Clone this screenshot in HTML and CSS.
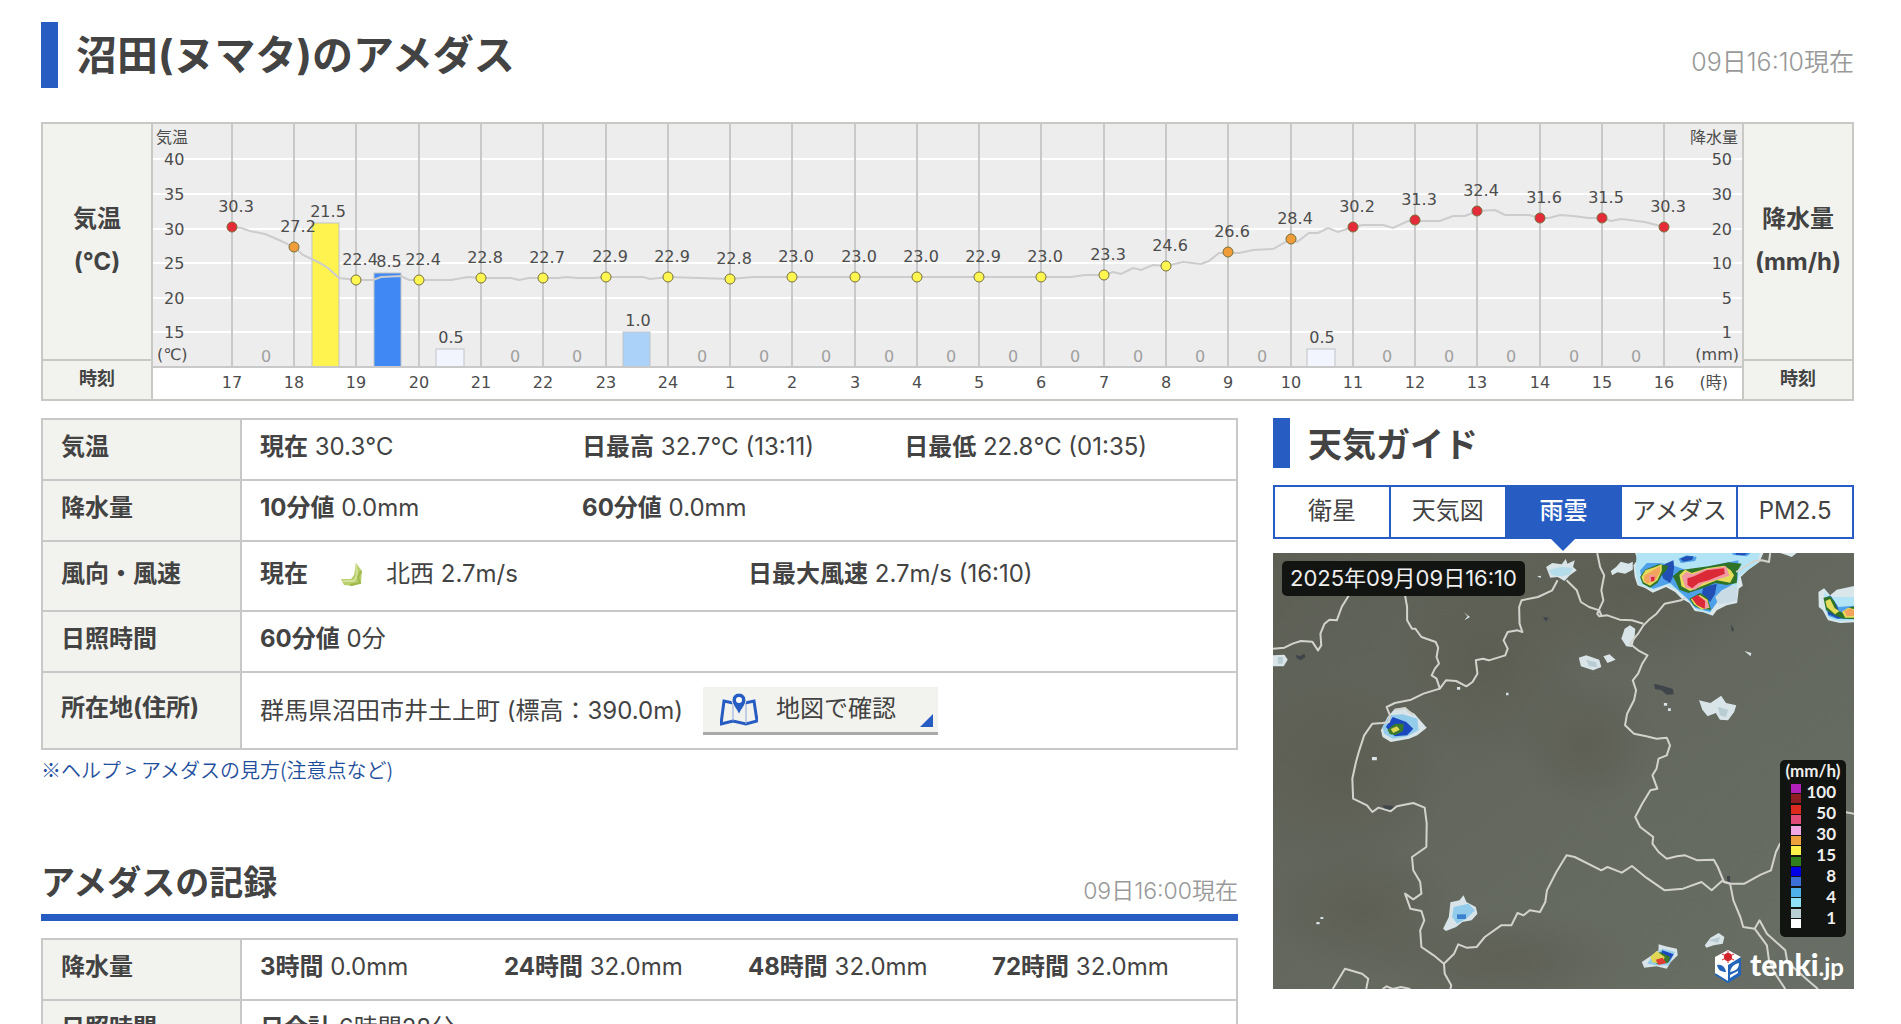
FILE: index.html
```html
<!DOCTYPE html>
<html lang="ja">
<head>
<meta charset="utf-8">
<meta name="viewport" content="width=device-width, initial-scale=1">
<title>沼田(ヌマタ)のアメダス</title>
<link rel="stylesheet" href="styles.css">
</head>
<body>
<div class="page">
  <header class="page-head">
    <h1 class="page-title">沼田(ヌマタ)のアメダス</h1>
    <time class="date date-large">09日16:10現在</time>
  </header>

  <table class="graph">
    <tr>
      <th class="graph-label">気温<br>(℃)</th>
      <td class="graph-cell" rowspan="2">
        <svg class="chart" viewBox="0 0 1589 275" role="img" aria-label="気温と降水量の推移">
          <rect class="plot" width="1589" height="243"/>
          <path class="h-grid" d="M0 35H1589M0 70H1589M0 105H1589M0 139H1589M0 174H1589M0 208H1589"/>
          <path class="v-grid" d="M79 0V243M141 0V243M203 0V243M266 0V243M328 0V243M390 0V243M453 0V243M515 0V243M577 0V243M639 0V243M702 0V243M764 0V243M826 0V243M888 0V243M951 0V243M1013 0V243M1075 0V243M1138 0V243M1200 0V243M1262 0V243M1324 0V243M1387 0V243M1449 0V243M1511 0V243"/>
          <g class="bars">
            <rect x="159" y="99" width="27" height="144" fill="#fff44f"/>
            <rect x="221" y="149" width="27" height="94" fill="#4088f4"/>
            <rect x="283" y="225" width="28" height="18" fill="#f3f5fe"/>
            <rect x="470" y="208" width="27" height="35" fill="#abd2f8"/>
            <rect x="1154" y="225" width="28" height="18" fill="#f3f5fe"/>
          </g>
          <path class="baseline" d="M0 243H1589"/>
          <path class="temp-line" d="M79 103L88 104L97 107L112 110L126 116L141 123L150 131L165 138L175 144L186 154L203 156L220 156L228 153L248 152L256 156H298L315 153L328 154H358L366 156L376 154L390 154H405L414 153L424 154H440L453 153H490L497 155L515 153L577 155L600 153H918L932 151L951 151L960 148L968 150L980 144L988 146L1000 141L1013 142L1030 138L1048 140L1056 137L1066 129H1086L1100 126L1120 125L1138 115L1144 118L1156 109H1165L1175 104L1185 108L1200 103L1210 101H1230L1240 104L1255 97H1287L1300 92L1312 92L1324 87L1342 86L1352 91H1376L1387 94L1396 94L1407 91L1420 92L1436 94H1449L1458 97L1468 95L1492 98L1511 103"/>
          <g class="dots">
            <g fill="#e52b38"><circle cx="79" cy="103" r="5"/><circle cx="1200" cy="103" r="5"/><circle cx="1262" cy="96" r="5"/><circle cx="1324" cy="87" r="5"/><circle cx="1387" cy="94" r="5"/><circle cx="1449" cy="94" r="5"/><circle cx="1511" cy="103" r="5"/></g>
            <g fill="#f09c38"><circle cx="141" cy="123" r="5"/><circle cx="1075" cy="128" r="5"/><circle cx="1138" cy="115" r="5"/></g>
            <g fill="#fff74f"><circle cx="203" cy="156" r="5"/><circle cx="266" cy="156" r="5"/><circle cx="328" cy="154" r="5"/><circle cx="390" cy="154" r="5"/><circle cx="453" cy="153" r="5"/><circle cx="515" cy="153" r="5"/><circle cx="577" cy="155" r="5"/><circle cx="639" cy="153" r="5"/><circle cx="702" cy="153" r="5"/><circle cx="764" cy="153" r="5"/><circle cx="826" cy="153" r="5"/><circle cx="888" cy="153" r="5"/><circle cx="951" cy="151" r="5"/><circle cx="1013" cy="142" r="5"/></g>
          </g>
          <g class="chart-text mid">
            <text x="83" y="88">30.3</text><text x="145" y="108">27.2</text><text x="207" y="141">22.4</text><text x="270" y="141">22.4</text><text x="332" y="139">22.8</text><text x="394" y="139">22.7</text><text x="457" y="138">22.9</text><text x="519" y="138">22.9</text><text x="581" y="140">22.8</text><text x="643" y="138">23.0</text><text x="706" y="138">23.0</text><text x="768" y="138">23.0</text><text x="830" y="138">22.9</text><text x="892" y="138">23.0</text><text x="955" y="136">23.3</text><text x="1017" y="127">24.6</text><text x="1079" y="113">26.6</text><text x="1142" y="100">28.4</text><text x="1204" y="88">30.2</text><text x="1266" y="81">31.3</text><text x="1328" y="72">32.4</text><text x="1391" y="79">31.6</text><text x="1453" y="79">31.5</text><text x="1515" y="88">30.3</text>
            <text x="175" y="93">21.5</text><text x="236" y="143">8.5</text><text x="298" y="219">0.5</text><text x="485" y="202">1.0</text><text x="1169" y="219">0.5</text>
          </g>
          <g class="chart-text mid zero">
            <text x="113" y="238">0</text><text x="362" y="238">0</text><text x="424" y="238">0</text><text x="549" y="238">0</text><text x="611" y="238">0</text><text x="673" y="238">0</text><text x="736" y="238">0</text><text x="798" y="238">0</text><text x="860" y="238">0</text><text x="922" y="238">0</text><text x="985" y="238">0</text><text x="1047" y="238">0</text><text x="1109" y="238">0</text><text x="1234" y="238">0</text><text x="1296" y="238">0</text><text x="1358" y="238">0</text><text x="1421" y="238">0</text><text x="1483" y="238">0</text>
          </g>
          <g class="chart-text mid">
            <text x="79" y="264">17</text><text x="141" y="264">18</text><text x="203" y="264">19</text><text x="266" y="264">20</text><text x="328" y="264">21</text><text x="390" y="264">22</text><text x="453" y="264">23</text><text x="515" y="264">24</text><text x="577" y="264">1</text><text x="639" y="264">2</text><text x="702" y="264">3</text><text x="764" y="264">4</text><text x="826" y="264">5</text><text x="888" y="264">6</text><text x="951" y="264">7</text><text x="1013" y="264">8</text><text x="1075" y="264">9</text><text x="1138" y="264">10</text><text x="1200" y="264">11</text><text x="1262" y="264">12</text><text x="1324" y="264">13</text><text x="1387" y="264">14</text><text x="1449" y="264">15</text><text x="1511" y="264">16</text>
          </g>
          <g class="chart-text">
            <text x="3" y="19">気温</text><text x="11" y="41">40</text><text x="11" y="76">35</text><text x="11" y="111">30</text><text x="11" y="145">25</text><text x="11" y="180">20</text><text x="11" y="214">15</text><text x="4" y="236">(℃)</text>
          </g>
          <g class="chart-text end">
            <text x="1585" y="19">降水量</text><text x="1579" y="41">50</text><text x="1579" y="76">30</text><text x="1579" y="111">20</text><text x="1579" y="145">10</text><text x="1579" y="180">5</text><text x="1579" y="214">1</text><text x="1586" y="236">(mm)</text><text x="1575" y="264">(時)</text>
          </g>
        </svg>
      </td>
      <th class="graph-label">降水量<br>(mm/h)</th>
    </tr>
    <tr>
      <th class="graph-time">時刻</th>
      <th class="graph-time">時刻</th>
    </tr>
  </table>

  <div class="columns">
    <main>
      <table class="data">
        <tr>
          <th>気温</th>
          <td><div class="cols-3"><span><b>現在</b> 30.3℃</span><span><b>日最高</b> 32.7℃ (13:11)</span><span><b>日最低</b> 22.8℃ (01:35)</span></div></td>
        </tr>
        <tr>
          <th>降水量</th>
          <td><div class="cols-3"><span><b>10分値</b> 0.0mm</span><span><b>60分値</b> 0.0mm</span></div></td>
        </tr>
        <tr class="row-wind">
          <th>風向・風速</th>
          <td><div class="cols-2"><span class="wind"><b>現在</b>
            <svg class="wind-icon" viewBox="0 0 24 24" aria-hidden="true"><path d="M16 1L22 9L21 21L13 24L4 23L1 17L11 17L14 13Z" fill="#b9ce6c"/><path d="M16 2L17 14L14 19L3 19" fill="none" stroke="#d3e29a" stroke-width="2"/><path d="M21 9L18 15L20 21L10 23" fill="none" stroke="#9fb84c" stroke-width="2"/></svg>
            北西 2.7m/s</span><span><b>日最大風速</b> 2.7m/s (16:10)</span></div></td>
        </tr>
        <tr>
          <th>日照時間</th>
          <td><b>60分値</b> 0分</td>
        </tr>
        <tr class="row-place">
          <th>所在地(住所)</th>
          <td><div class="place"><span>群馬県沼田市井土上町 (標高：390.0m)</span>
            <a class="map-link" href="#map"><svg class="map-icon" viewBox="0 0 38 34" aria-hidden="true"><path d="M13 11L4 9L1 32L13 29L26 32L37 29L34 9L25 11" fill="none" stroke="#275dc2" stroke-width="3"/><path d="M13 12V29M26 12V32" stroke="#8faade" stroke-width="1"/><path d="M19 23C17 17 12 13 12 8A7 7 0 0 1 26 8C26 13 21 17 19 23Z" fill="#275dc2" stroke="#f2f3ee" stroke-width="1"/><circle cx="19" cy="8" r="3" fill="#fff"/></svg>地図で確認</a></div></td>
        </tr>
      </table>
      <p class="help"><a href="#help">※ヘルプ &gt; アメダスの見方(注意点など)</a></p>

      <div class="section-head">
        <h2>アメダスの記録</h2>
        <time class="date">09日16:00現在</time>
      </div>
      <table class="data">
        <tr>
          <th>降水量</th>
          <td><div class="cols-4"><span><b>3時間</b> 0.0mm</span><span><b>24時間</b> 32.0mm</span><span><b>48時間</b> 32.0mm</span><span><b>72時間</b> 32.0mm</span></div></td>
        </tr>
        <tr>
          <th>日照時間</th>
          <td><b>日合計</b> 6時間28分</td>
        </tr>
      </table>
    </main>

    <aside>
      <h2 class="guide-title">天気ガイド</h2>
      <nav class="tabs">
        <a href="#satellite">衛星</a><a href="#chart">天気図</a><a class="active" href="#radar" aria-current="page">雨雲</a><a href="#amedas">アメダス</a><a href="#pm25">PM2.5</a>
      </nav>
      <div class="radar">
        <svg class="radar-map" viewBox="32 428 1421 1308" preserveAspectRatio="none" role="img" aria-label="雨雲の動き">
          <defs>
            <linearGradient id="land" x1="0" y1="0" x2="1" y2="1"><stop offset="0" stop-color="#5d5f55"/><stop offset=".45" stop-color="#63675d"/><stop offset="1" stop-color="#696f66"/></linearGradient>
            <radialGradient id="shade"><stop offset="0" stop-color="#58564b" stop-opacity=".5"/><stop offset="1" stop-color="#58564b" stop-opacity="0"/></radialGradient>
          </defs>
          <rect x="32" y="428" width="1421" height="1308" fill="url(#land)"/>
          <g fill="url(#shade)"><ellipse cx="900" cy="540" rx="360" ry="240"/><ellipse cx="200" cy="1080" rx="260" ry="300"/><ellipse cx="560" cy="750" rx="240" ry="320"/><ellipse cx="800" cy="1000" rx="170" ry="200"/><ellipse cx="600" cy="1650" rx="360" ry="160"/><ellipse cx="250" cy="1500" rx="240" ry="200"/></g>
          <g fill="#3e464b"><path d="M88 733L98 738L108 730L112 740L100 750L90 744Z"/><path d="M964 820L985 826L1010 836L1012 852L995 853L982 840L966 836Z"/><path d="M300 1185L325 1186L328 1196L306 1198Z"/><path d="M692 620L706 622L700 634Z"/><path d="M1142 1398L1150 1396L1150 1415L1143 1412Z"/><path d="M1152 640L1160 660L1154 664Z"/></g>
          <g transform="translate(832 420) scale(.8153 1)">
            <path fill="#d9e7ea" d="M105 8L112 28L100 45L104 80L112 105L135 113L158 127L198 110L225 125L245 145L268 158L284 182L310 186L338 196L350 180L380 165L411 158L416 115L428 106L422 80L445 58L478 35L490 8ZM32 62L48 50L62 34L85 40L98 34L98 58L75 70L52 66L36 75ZM655 125L672 114L690 135L710 118L762 107V216L720 218L684 210L668 180L656 170ZM540 8L552 12L575 20L585 12L590 8Z"/>
            <path fill="#b3e4f5" d="M110 8L106 60L116 104L135 107L158 120L198 103L230 120L268 152L290 180L330 189L345 150L380 130L410 108L416 78L470 40L480 8ZM672 125L688 140L762 140V210L720 213L688 205L675 180Z"/>
            <path fill="#4ea1e8" d="M120 60L140 38L180 38L215 44L260 60L320 50L415 30L412 90L375 120L345 165L330 185L285 172L262 145L210 98L160 115L126 98ZM235 25L260 15L290 20L285 32L242 38ZM395 8H452L440 18L400 14ZM676 142L690 134L715 170L762 166V207L710 206L684 196Z"/>
            <path fill="#214fb4" d="M196 40L220 30L222 50L218 80L210 98L190 85L180 60ZM310 110L350 100L345 130L330 155L305 130ZM240 25L258 18L280 18L276 29L250 34ZM406 8L444 9L432 15L408 13ZM676 146L692 138L710 165L720 190L740 200L715 205L684 192Z"/>
            <path fill="#2f7329" d="M120 80L135 58L175 42L204 46L200 58L185 75L172 98L150 112L128 100ZM218 78L240 60L270 55L325 48L385 36L425 40L412 62L410 98L380 104L345 98L312 112L265 128L238 118L226 92ZM268 145L300 128L322 142L333 178L300 175L280 165ZM670 142L690 138L704 155L712 180L730 188L745 172L762 168V206L728 205L705 195L678 180Z"/>
            <path fill="#e4dc5b" d="M124 80L136 60L165 50L185 42L185 62L172 90L150 106L130 96ZM238 74L255 58L275 68L320 54L372 46L392 60L402 75L390 97L350 90L305 108L270 122L244 108ZM272 146L300 134L322 148L328 172L305 178L282 162ZM676 152L690 146L704 174L718 182L705 192L680 170ZM726 184L744 172L762 176V202L735 202Z"/>
            <path fill="#f2a45f" d="M132 76L150 65L180 48L180 66L166 90L142 100L132 92ZM732 182L750 174L762 180V196L740 198Z"/>
            <path fill="#f19aa4" d="M245 78L260 64L278 72L310 58L378 48L388 76L350 88L310 98L285 118L256 112ZM146 76L162 74L164 88L150 94ZM296 136L320 152L328 170L312 176Z"/>
            <path fill="#db2937" d="M262 84L282 78L320 60L372 54L374 70L325 90L295 98L276 114L262 104ZM275 144L292 134L315 152L314 176L290 164ZM152 80L164 79L162 92L154 94Z"/>
            <path fill="#c9dbe4" d="M345 140L365 120L395 105L412 112L410 150L380 158L355 162Z"/>
          </g>
          <g fill="#d8e4e7">
            <path d="M700 470L715 458L738 462L748 446L752 460L770 450L766 470L775 480L758 495L745 512L728 500L710 502ZM678 498L688 496L686 503Z"/>
            <path d="M892 655L905 645L918 655L916 685L910 710L896 708L884 685Z"/><path d="M780 742L798 735L830 748L835 770L815 780L785 768ZM840 738L855 732L870 748L850 758Z"/>
            <path d="M32 735L60 733L68 748L58 768L32 768Z"/><path d="M1074 870L1102 878L1128 856L1140 878L1165 885L1160 905L1145 930L1125 928L1115 908L1095 918L1082 898Z"/>
            <path d="M1088 1605L1102 1582L1122 1568L1136 1580L1132 1600L1110 1605L1092 1612Z"/><path d="M1185 722L1202 728L1200 738ZM498 606L514 620L500 630L508 618ZM274 1040H286V1050H274ZM482 830H490V838H482ZM602 847H608V855H602ZM988 878H996V886H988ZM998 894H1005V902H998ZM138 1535H146V1542H138ZM148 1520H155V1526H148Z"/>
            <path d="M296 960L312 920L330 895H355L378 910L408 952L385 975L365 985L320 995L300 980Z"/><path d="M448 1555L462 1520L466 1476L488 1470L498 1455L505 1475L528 1490L532 1510L518 1530L495 1535L480 1550L455 1562Z"/><path d="M934 1655L955 1638L975 1620L975 1602L992 1608L1020 1615L1022 1635L1005 1655L995 1675L970 1668L940 1672Z"/>
          </g>
          <g fill="#93cbea"><path d="M706 480L735 470L765 472L758 492L740 498L715 495Z" fill="#b4dcea"/><path d="M300 950L318 915L350 912L385 925L388 960L360 978L325 985L304 970Z"/><path d="M470 1520L474 1490L510 1480L526 1500L505 1525L482 1540Z"/><path d="M948 1660L960 1635L985 1615L1015 1625L1000 1665L970 1665Z"/></g>
          <g fill="#b8ccd4"><path d="M798 748L822 756L825 770L805 768ZM44 740H56V760H44ZM1120 890L1145 898L1140 920L1125 915ZM1098 1590L1126 1580L1120 1597Z"/></g>
          <g fill="#1c48bf"><path d="M308 950L325 920L358 935L375 955L360 975L330 978Z"/><path d="M482 1512H504V1526H482Z" fill="#3c80d0"/><path d="M984 1620L1012 1632L1000 1655L975 1645Z"/></g>
          <path fill="#3a7a2e" d="M312 958L330 940L352 940L350 962L332 974L318 972ZM960 1642L978 1625L1004 1640L998 1658L970 1660Z"/>
          <path fill="#dfd653" d="M320 956L335 948L342 958L326 968ZM955 1640L970 1622L990 1640L985 1660L960 1656Z"/><path fill="#df3a36" d="M968 1648L985 1642L994 1658L975 1664Z"/>
          <g class="borders">
            <path d="M32 715L60 712L80 700L100 692L128 694L142 720L150 705L148 670L158 640L170 628L188 630L200 590L220 550L240 540M355 555L360 590V630L372 655H380L395 680L430 695L436 712L432 740L438 760L428 775L420 795L432 805L440 835L455 810L480 812L505 828L520 815L532 790L528 750L545 745L560 750L600 735L606 715L596 690L606 665L630 660L642 665L635 640L634 590L640 570L680 560L715 540L728 510M750 510L775 540L785 575L805 590L830 600L835 615M825 428L832 470L842 495L835 540L840 570L825 610L830 618L850 615L880 628L910 630L938 640"/>
            <path d="M1248 428L1245 455L1228 450L1210 452L1165 485M1040 562L1030 570L990 580L970 610L950 630L938 645L925 670L905 700L925 720L948 735L935 760L925 790L912 810L920 840L915 870L898 910L893 945L915 970L945 978L970 985L995 982L1003 1005L995 1035L975 1045L970 1075L960 1095L972 1135L955 1140L935 1180L918 1220L930 1250L962 1280L960 1300L975 1325L995 1345L1020 1338L1040 1335L1070 1350L1110 1348L1120 1370L1135 1415L1150 1420"/>
            <path d="M440 835L400 850L370 868L330 878L310 890L318 915L316 935L300 938L275 940L255 975L243 1020L235 1055L226 1105L228 1165L262 1185L275 1205L290 1192L320 1203L335 1188L375 1178L403 1192L408 1240L407 1310L372 1340L375 1380L392 1415L395 1450L375 1467L355 1450L368 1495L395 1502L402 1530L392 1560L395 1610L425 1635L450 1660L452 1690L468 1725L466 1736M450 1660L475 1630L485 1602L505 1612L530 1610L550 1580L590 1545H615L630 1508L645 1515L660 1500L685 1505L698 1475L702 1440L725 1385L750 1335L770 1340L835 1380L850 1370L885 1387L910 1367L945 1402L990 1440L1035 1435L1080 1415L1105 1440L1130 1412L1150 1420L1185 1420L1225 1393L1250 1380L1262 1325L1272 1300L1300 1285L1340 1250L1430 1205L1453 1210"/>
            <path d="M1150 1420L1158 1470L1175 1520L1182 1550L1210 1555L1222 1530L1240 1570L1285 1620L1290 1655L1340 1710L1365 1736M1210 1555L1240 1605L1245 1650L1260 1690L1285 1736M178 1736L208 1675L250 1690L265 1705L260 1736M300 1736L310 1728L325 1736L345 1730L368 1736M330 898L355 893L375 915"/>
          </g>
        </svg>
        <time class="stamp">2025年09月09日16:10</time>
        <div class="legend">
          <div class="legend-unit">(mm/h)</div>
          <div class="legend-body">
            <div class="swatches"><i class="s1"></i><i class="s2"></i><i class="s3"></i><i class="s4"></i><i class="s5"></i><i class="s6"></i><i class="s7"></i><i class="s8"></i><i class="s9"></i><i class="s10"></i><i class="s11"></i><i class="s12"></i><i class="s13"></i><i class="s14"></i></div>
            <div class="levels"><span>100</span><span>50</span><span>30</span><span>15</span><span>8</span><span>4</span><span>1</span></div>
          </div>
        </div>
        <div class="brand">
          <svg class="brand-icon" viewBox="0 0 28 34" aria-hidden="true"><path d="M14 1L27 8V25L14 33L1 25V8Z" fill="#fff"/><path d="M27 8L14 16V33L27 25Z" fill="#2565b8"/><path d="M1 25L14 33L27 25" fill="none" stroke="#2565b8" stroke-width="2"/><circle cx="14" cy="8" r="4" fill="#d3262c"/><path d="M14 2V14M8 5L20 11M8 11L20 5" stroke="#d3262c" stroke-width="1"/><path d="M3 16C8 15 11 18 12 23C7 23 4 21 3 16Z" fill="#2565b8"/><path d="M16 23C17 18 20 15 25 14C25 20 21 22 16 23ZM16 26L24 22V24L16 29Z" fill="#fff"/></svg>
          <span>tenki<small>.jp</small></span>
        </div>
      </div>
    </aside>
  </div>
</div>
</body>
</html>
```
FILE: styles.css
```css
* { box-sizing: border-box; }

body {
  margin: 0;
  background: #fff;
  color: #434343;
  font: 24px/34px Inter, "Noto Sans CJK JP", sans-serif;
}

h1, h2, p { margin: 0; }
a { color: inherit; text-decoration: none; }
table { width: 100%; border-collapse: collapse; }

.page { padding: 22px 47px 0 41px; }

.page-head {
  display: flex;
  justify-content: space-between;
  align-items: center;
  margin-bottom: 34px;
}
.page-title {
  padding-left: 18px;
  border-left: 17px solid #275dc2;
  font-size: 41px;
  line-height: 66px;
}
.date { color: #999; font-weight: 350; font-size: 23px; }
.date-large { font-size: 25px; padding-top: 14px; }

/* graph */
.graph th {
  width: 110px;
  padding: 0 0 4px;
  background: #f2f3ee;
  border: 2px solid #c8c8c4;
}
.graph-label { font-size: 24px; line-height: 43px; }
.graph .graph-time { height: 40px; padding-bottom: 2px; font-size: 18px; line-height: 24px; }
.graph-cell { padding: 0; border: 2px solid #c8c8c4; }
.chart { display: block; width: 100%; height: auto; }
.plot { fill: #ededed; }
.h-grid { stroke: #fff; stroke-width: 2; }
.v-grid, .baseline { stroke: #c9c9c9; stroke-width: 2; }
.bars { stroke: #bfc3c8; }
.temp-line { fill: none; stroke: #ccc; stroke-width: 2; }
.dots { stroke: #77703f; stroke-width: 1; }
.chart-text { font: 16px "DejaVu Sans", "Noto Sans CJK JP", sans-serif; fill: #4c4c4c; }
.zero { fill: #a0a0a0; }
.mid { text-anchor: middle; }
.end { text-anchor: end; }

/* two-column area */
.columns {
  display: grid;
  grid-template-columns: minmax(0, 1197fr) minmax(0, 581fr);
  column-gap: 35px;
  align-items: start;
  margin-top: 17px;
}

.data th, .data td {
  padding: 8px 0 13px 18px;
  border: 2px solid #c8c8c8;
  vertical-align: middle;
  text-align: left;
}
.data th { width: 199px; background: #f2f3ee; }
.data td { font-weight: 400; }
.data b { font-weight: 700; }
.data tr { height: 61px; }
.data .row-wind { height: 70px; }
.data .row-place { height: 77px; }
.data .row-place td { padding: 0 0 0 18px; }
.cols-2, .cols-3, .cols-4 { display: grid; }
.cols-2 { grid-template-columns: 50% 50%; }
.cols-3 { grid-template-columns: 33% 33% 33%; }
.cols-4 { grid-template-columns: repeat(4, 25%); }
.wind { display: flex; align-items: center; }
.wind-icon { width: 24px; height: 24px; margin: 0 22px 0 32px; }
.place { display: flex; align-items: center; gap: 20px; }
.map-link {
  position: relative;
  display: flex;
  align-items: center;
  width: 235px;
  height: 48px;
  padding-left: 17px;
  gap: 18px;
  background: #f2f3ee;
  border-bottom: 3px solid #aaa;
}
.map-link::after {
  content: "";
  position: absolute;
  right: 5px;
  bottom: 5px;
  border-left: 13px solid transparent;
  border-bottom: 13px solid #275dc2;
}
.map-icon { width: 38px; height: 34px; }

.help {
  margin-top: 5px;
  color: #1f4f9c;
  font: 350 20px/30px "Noto Sans CJK JP", sans-serif;
}

.section-head {
  display: flex;
  justify-content: space-between;
  align-items: flex-end;
  margin: 73px 0 17px;
  padding-bottom: 6px;
  border-bottom: 7px solid #275dc2;
}
.section-head h2 { font-size: 34px; line-height: 50px; }

/* guide */
.guide-title {
  padding: 4px 0 0 18px;
  border-left: 17px solid #275dc2;
  font-size: 34px;
  line-height: 46px;
}
.tabs { display: flex; margin: 17px 0 14px; border: 2px solid #275dc2; }
.tabs a {
  position: relative;
  flex: 1 1 0;
  height: 50px;
  line-height: 48px;
  text-align: center;
  white-space: nowrap;
}
.tabs a + a { border-left: 2px solid #275dc2; }
.tabs .active { background: #275dc2; color: #fff; font-weight: 500; }
.tabs .active::after {
  content: "";
  position: absolute;
  top: 100%;
  left: 50%;
  margin-left: -14px;
  border: 14px solid transparent;
  border-top-color: #275dc2;
  border-bottom: 0;
}

.radar { position: relative; aspect-ratio: 581 / 436; overflow: hidden; }
.radar-map { display: block; width: 100%; height: 100%; }
.borders path {
  fill: none;
  stroke: #d3d3cd;
  stroke-width: 2px;
  stroke-linejoin: round;
  vector-effect: non-scaling-stroke;
}
.stamp {
  position: absolute;
  top: 8px;
  left: 9px;
  padding: 0 8px;
  border-radius: 5px;
  background: #121411;
  color: #eee;
  font-size: 22px;
  line-height: 35px;
}
.legend {
  position: absolute;
  right: 8px;
  bottom: 52px;
  width: 66px;
  padding-bottom: 9px;
  border-radius: 5px;
  background: #121411;
  color: #eee;
  font: 700 17px/21px Lato, sans-serif;
}
.legend-unit { padding-top: 1px; line-height: 20px; text-align: center; }
.legend-body { display: flex; justify-content: space-between; padding: 0 10px 0 11px; }
.swatches {
  display: grid;
  grid-auto-rows: 9px;
  align-content: space-between;
  width: 10px;
  padding-top: 3px;
}
.levels { text-align: right; }
.levels span { display: block; }
.s1 { background: #b121b9; }
.s2 { background: #8e1c22; }
.s3 { background: #dd2a1e; }
.s4 { background: #e24a78; }
.s5 { background: #f3a8e6; }
.s6 { background: #eca13c; }
.s7 { background: #fdf04a; }
.s8 { background: #2f7f1f; }
.s9 { background: #0000e6; }
.s10 { background: #3c6fd8; }
.s11 { background: #4fb1ea; }
.s12 { background: #8fe1f5; }
.s13 { background: #b8cfd4; }
.s14 { background: #fff; }
.brand {
  position: absolute;
  right: 10px;
  bottom: 5px;
  display: flex;
  align-items: center;
  gap: 8px;
  color: #fff;
  font: 900 30px/34px Lato, sans-serif;
}
.brand small { font-size: 24px; font-weight: 700; }
.brand-icon { width: 28px; height: 34px; }
```
